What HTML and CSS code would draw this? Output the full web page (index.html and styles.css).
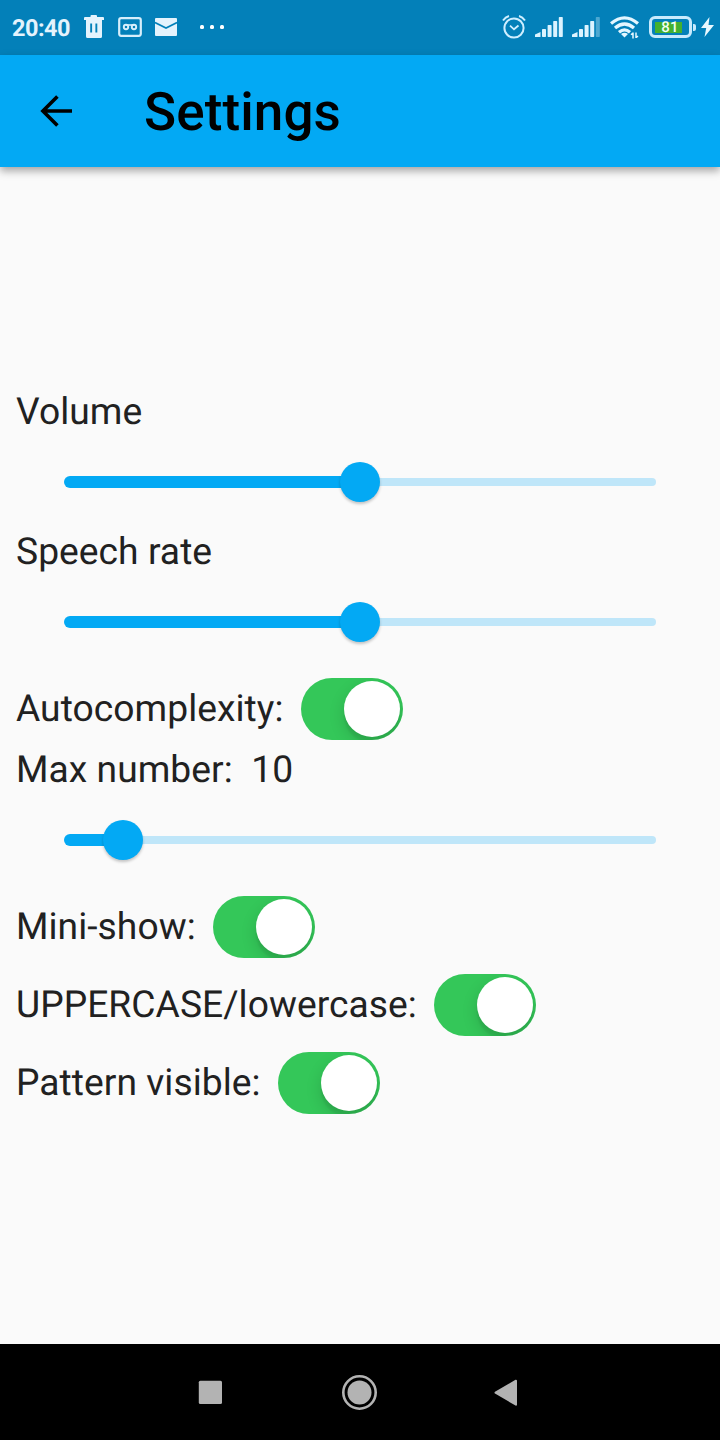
FILE: index.html
```html
<!DOCTYPE html>
<html lang="en">
<head>
<meta charset="utf-8">
<title>Settings</title>
<link rel="stylesheet" href="styles.css">
</head>
<body>
<div class="screen">
  <div class="status-bar">
    <div class="status-left">
      <span class="clock">20:40</span>
      <svg class="icon-trash" width="22" height="24" viewBox="0 0 22 24"><path fill="#e4f3fd" fill-rule="evenodd" d="M7.500 2V1Q7.500 0 8.500 0h4.500Q14 0 14 1v1h6q1 0 1 1v2h-2v16.500q0 1.500-1.500 1.500h-13Q3 23 3 21.500V5H1V3q0-1 1-1zM7.200 8.500v9h1.900v-9zm5.200 0v9h1.900v-9z"/></svg>
      <svg class="icon-voicemail" width="24" height="20" viewBox="0 0 24 20" fill="none" stroke="#d6eefb"><rect x="1.200" y="1.200" width="21.600" height="17.600" rx="2" stroke-width="2.200"/><circle cx="8" cy="10" r="2.200" stroke-width="1.900"/><circle cx="16" cy="10" r="2.200" stroke-width="1.900"/><path d="M8 8h8" stroke-width="1.600"/></svg>
      <svg class="icon-mail" width="22" height="18" viewBox="0 0 22 18"><rect width="22" height="18" rx="1" fill="#e4f3fd"/><path d="M0 4.500l11 5.500 11-5.500" fill="none" stroke="#0380b9" stroke-width="1.600"/></svg>
      <svg class="icon-more" width="26" height="4" viewBox="0 0 26 4" fill="#fff"><rect x="0" width="4" height="4" rx="1.500"/><rect x="10" width="4" height="4" rx="1.500"/><rect x="20" width="4" height="4" rx="1.500"/></svg>
    </div>
    <div class="status-right">
      <svg class="icon-alarm" width="24" height="24" viewBox="0 0 24 24" fill="none" stroke="#cfeeff" stroke-width="2"><circle cx="12" cy="13" r="9.600"/><path d="M1 5.500Q3.500 1.800 7 1M23 5.500Q20.500 1.800 17 1"/><path d="M8 10.700l4 3.600 4.500-3.800" stroke-width="1.800"/></svg>
      <svg class="icon-signal" width="28" height="20" viewBox="0 0 28 20" fill="#dbf3ff"><path d="M0 20v-2.500L5.500 15V20z"/><rect x="7" y="12" width="4" height="8" rx=".7"/><rect x="12.600" y="8" width="4" height="12" rx=".7"/><rect x="18.200" y="4" width="4" height="16" rx=".7"/><rect x="23.800" y="0" width="4" height="20" rx=".7"/></svg>
      <svg class="icon-signal" width="28" height="20" viewBox="0 0 28 20" fill="#dbf3ff"><path d="M0 20v-2.500L5.500 15V20z"/><rect x="7" y="12" width="4" height="8" rx=".7"/><rect x="12.600" y="8" width="4" height="12" rx=".7"/><rect x="18.200" y="4" width="4" height="16" rx=".7"/><rect x="23.800" y="0" width="4" height="20" rx=".7" opacity=".35"/></svg>
      <svg class="icon-wifi" width="29" height="24" viewBox="0 0 29 24" fill="none" stroke="#e4f6ff" stroke-width="3.300"><path d="M1 7.500Q14.500-3.800 28 7.500"/><path d="M5 12q9.500-8 19 0"/><path d="M9 16.200q5.500-4.600 11 0"/><path d="M11 18q3.500-2.500 7 0L14.500 21.500z" fill="#e4f6ff" stroke="none"/><path d="M23 16.500v6M21 18.700l1.700-1.500M26 16.500V22M28 20l-1.700 1.500" stroke-width="1.500"/></svg>
      <div class="battery"><div class="battery-fill">81</div></div>
      <div class="battery-tip"></div>
      <svg class="icon-bolt" width="13" height="20" viewBox="0 0 13 20"><path d="M8.500 0L0 11h5.200L3.500 20 13 8H7.500z" fill="#e9f8ff"/></svg>
    </div>
  </div>

  <header class="app-bar">
    <svg class="back" width="32" height="32" viewBox="0 0 32 32" fill="none" stroke="#000" stroke-width="3.600"><path d="M32 16H3M17.400 1.500L2.900 16l14.500 14.500"/></svg>
    <h1 class="title">Settings</h1>
  </header>

  <main class="settings">
    <div class="label">Volume</div>
    <div class="slider"><div class="active" style="width:50%"></div><div class="thumb"></div><div class="inactive"></div></div>
    <div class="label">Speech rate</div>
    <div class="slider"><div class="active" style="width:50%"></div><div class="thumb"></div><div class="inactive"></div></div>
    <div class="row"><span class="label">Autocomplexity: </span><div class="switch"><div class="knob"></div></div></div>
    <div class="label">Max number:  10</div>
    <div class="slider"><div class="active" style="width:10%"></div><div class="thumb"></div><div class="inactive"></div></div>
    <div class="row"><span class="label">Mini-show: </span><div class="switch"><div class="knob"></div></div></div>
    <div class="row"><span class="label">UPPERCASE/lowercase: </span><div class="switch"><div class="knob"></div></div></div>
    <div class="row"><span class="label">Pattern visible: </span><div class="switch"><div class="knob"></div></div></div>
  </main>

  <nav class="nav-bar">
    <svg width="24" height="24" viewBox="0 0 24 24"><rect x=".8" y=".8" width="23.200" height="23.200" rx="1.500" fill="#b3b3b3"/></svg>
    <svg class="home" width="36" height="36" viewBox="0 0 36 36"><circle cx="17.500" cy="18.500" r="16.200" fill="none" stroke="#b3b3b3" stroke-width="2.600"/><circle cx="17.500" cy="18.500" r="12" fill="#b3b3b3"/></svg>
    <svg width="24" height="28" viewBox="0 0 24 28"><path d="M1.500 14.700L22 2.700v24z" fill="#b3b3b3" stroke="#b3b3b3" stroke-width="2" stroke-linejoin="round"/></svg>
  </nav>
</div>
</body>
</html>
```
FILE: styles.css
```css
* { box-sizing: border-box; }
body { margin: 0; background: #fafafa; font-family: Roboto, sans-serif; text-rendering: geometricPrecision; }
svg { display: block; flex: none; }

.screen { width: 720px; height: 1440px; display: flex; flex-direction: column; overflow: hidden; }

.status-bar { height: 55px; flex: none; display: flex; justify-content: space-between; background: #0380b9; }
.status-left, .status-right { display: flex; align-items: center; height: 54px; }
.status-left { padding-left: 12px; }
.clock { width: 58px; font-size: 23.500px; font-weight: 700; line-height: 28px; letter-spacing: -.5px; color: #e4f3fd; margin-top: 2px; white-space: nowrap; }
.icon-trash { margin-left: 13px; }
.icon-voicemail { margin-left: 13px; }
.icon-mail { margin-left: 13px; }
.icon-more { margin-left: 23px; }
.icon-signal { margin-left: 9px; }
.icon-wifi { margin: 2px 0 0 10px; }
.status-right { padding-right: 6px; }
.battery { width: 43px; height: 22px; margin-left: 10px; padding: 2.500px 3px; border: 3px solid #c8eafd; border-radius: 6px; }
.battery-fill { width: 27px; height: 11px; display: flex; align-items: center; justify-content: center; background: #43b02f; color: #f4fff4; font-size: 15px; font-weight: 500; line-height: 13px; letter-spacing: .3px; padding: 0 0 0 3px; }
.battery-tip { width: 3px; height: 7px; margin-left: 1px; border-radius: 0 2px 2px 0; background: #c8eafd; }
.icon-bolt { margin-left: 5px; }

.app-bar { position: relative; height: 112px; flex: none; display: flex; align-items: center; padding-left: 40px; background: #03a9f4; box-shadow: 0 4px 8px rgba(0, 0, 0, .34); }
.title { margin: 2px 0 0 72px; font-size: 53px; font-weight: 500; line-height: 62px; letter-spacing: .1px; color: #000; }

.settings { flex: 1; display: flex; flex-direction: column; justify-content: center; padding: 0 16px; }
.label { height: 44px; font-size: 37.2px; line-height: 44px; letter-spacing: .05px; color: #212121; white-space: pre; }
.row { height: 78px; display: flex; align-items: center; }

.slider { height: 96px; display: flex; align-items: center; padding: 0 48px; }
.active { flex: none; height: 12px; border-radius: 6px 0 0 6px; background: #03a9f4; }
.thumb { position: relative; width: 40px; height: 40px; flex: none; margin: 0 -20px; border-radius: 50%; background: #03a9f4; box-shadow: 0 2px 3px rgba(0, 0, 0, .22); }
.inactive { flex: 1; height: 8px; border-radius: 0 4px 4px 0; background: #bfe6f9; }

.switch { width: 102px; height: 62px; margin: 0 8px; padding: 3px; display: flex; justify-content: flex-end; border-radius: 31px; background: #34c759; overflow: hidden; }
.knob { width: 56px; height: 56px; border-radius: 50%; background: #fff; box-shadow: 0 6px 16px rgba(0, 0, 0, .15), 0 6px 2px rgba(0, 0, 0, .06); }

.nav-bar { height: 96px; flex: none; display: flex; align-items: center; justify-content: space-between; padding: 0 202px 0 198px; background: #000; }
.home { margin-left: 3px; }
```
